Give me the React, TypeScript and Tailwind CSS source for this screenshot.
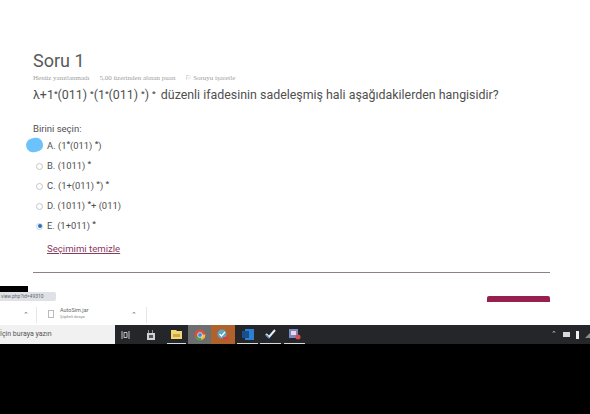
import React from "react";

const options = [
  { key: "A", body: "(1", sup1: "*", rest: "(011) ", sup2: "*", tail: ")" },
  { key: "B", body: "(1011) ", sup1: "*", rest: "", sup2: "", tail: "" },
  { key: "C", body: "(1+(011) ", sup1: "*", rest: ") ", sup2: "*", tail: "" },
  { key: "D", body: "(1011) ", sup1: "*", rest: "+ (011)", sup2: "", tail: "" },
  { key: "E", body: "(1+011) ", sup1: "*", rest: "", sup2: "", tail: "", checked: true },
];

function Sup({ children }: { children: React.ReactNode }) {
  return <span className="relative -top-[3px] text-[8px] font-bold leading-none">{children}</span>;
}

function Option({ item }: { item: (typeof options)[number] }) {
  return (
    <li className="flex h-5 items-center">
      <span className="flex w-[13px] justify-center">
        {item.checked ? (
          <span className="flex h-[7px] w-[7px] items-center justify-center rounded-full border border-[#c3d3e6]">
            <span className="h-[4px] w-[4px] rounded-full bg-[#2f6fb5]" />
          </span>
        ) : (
          <span className="h-[7px] w-[7px] rounded-full border border-[#c4c4c4]" />
        )}
      </span>
      <span className="ml-[1px] whitespace-pre text-[9.4px] text-[#505050]">
        {item.key}. {item.body}
        {item.sup1 && <Sup>{item.sup1}</Sup>}
        {item.rest}
        {item.sup2 && <Sup>{item.sup2}</Sup>}
        {item.tail}
      </span>
    </li>
  );
}

function Quiz() {
  return (
    <div className="relative h-[305px] overflow-hidden bg-white pl-[33px] pr-[40px] pt-[50px]">
      <h1 className="text-[18px] leading-[22px] text-[#5a5a5a]">Soru 1</h1>
      <div className="mt-[3px] flex h-[6px] items-center gap-[10px] whitespace-nowrap font-['Liberation_Serif',serif] text-[7px] leading-none text-[#a0a0a0]">
        <span>Henüz yanıtlanmadı</span>
        <span>5,00 üzerinden alınan puan</span>
        <span>⚐ Soruyu işaretle</span>
      </div>
      <p className="mt-[5px] whitespace-pre text-[12.4px] leading-[18px] text-[#505050]">
        λ+1<Sup>*</Sup>(011) <Sup>*</Sup>(1<Sup>*</Sup>(011) <Sup>*</Sup>) <Sup>*</Sup>
        <span className="ml-[2px]"> düzenli ifadesinin sadeleşmiş hali aşağıdakilerden hangisidir?</span>
      </p>
      <p className="mt-[18px] text-[9.5px] leading-[14px] text-[#505050]">Birini seçin:</p>
      <ul>
        {options.map((item) => (
          <Option key={item.key} item={item} />
        ))}
      </ul>
      <a className="ml-[14px] mt-[6px] block text-[9.6px] leading-[14px] text-[#8a3a5e] underline">Seçimimi temizle</a>
      <div className="mt-[16px] h-px bg-[#8f7f86]" />
      <div className="mt-[23px] flex justify-end">
        <div className="h-[6px] w-[63px] rounded-t-[2px] bg-[#96214f]" />
      </div>
      {/* pen mark and the status bubble lie over the page */}
      <span className="absolute left-[26px] top-[138px] h-[14px] w-[17px] -rotate-12 rounded-full bg-[#6cc3fb]" />
      <span className="absolute left-0 top-[286px] h-[6px] w-[28px] bg-black" />
      <span className="absolute left-0 top-[292px] flex h-[9px] w-[56px] items-center rounded-r-[2px] bg-[#dee1e6] pl-[1px] text-[5px] text-[#666666]">
        view.php?id=49310
      </span>
    </div>
  );
}

function DownloadBar() {
  return (
    <div className="flex h-[20px] items-center bg-white py-[2px] text-[#666666]">
      <div className="flex h-full w-[37px] items-center justify-end border-r border-[#e6e6e6] pr-[7px]">
        <span className="text-[7px]">⌃</span>
      </div>
      <div className="flex h-full w-[110px] items-center border-r border-[#e6e6e6] pl-[11px]">
        <span className="-mt-[3px] h-[8px] w-[6px] border border-[#bbbbbb]" />
        <div className="-mt-[3px] ml-[6px] flex flex-col leading-none">
          <span className="text-[5.5px]">AutoSim.jar</span>
          <span className="mt-[1px] text-[4px] text-[#888888]">Şüpheli dosya</span>
        </div>
        <span className="ml-auto mr-[9px] text-[7px]">⌃</span>
      </div>
    </div>
  );
}

function Taskbar() {
  return (
    <div className="flex h-[19px] items-stretch bg-[#24262a]">
      <div className="flex w-[115px] items-center overflow-hidden bg-[#f1f1f1] text-[7px] text-[#555555]">
        <span className="whitespace-nowrap">İçin buraya yazın</span>
      </div>
      <div className="flex w-[20px] items-center justify-center">
        <svg width="9" height="8" viewBox="0 0 9 8" fill="none" stroke="#c4c4c4" strokeWidth="1">
          <path d="M1 0v8M8 0v8M3 1.5h3v5H3z" />
        </svg>
      </div>
      <div className="flex w-[32px] items-center justify-center">
        <svg width="10" height="10" viewBox="0 0 10 10">
          <path d="M1 3h8v7H1z" fill="#cfd3d6" />
          <path d="M2 0h1v3H2zM6 0h1v3H6z" fill="#8f9497" />
          <path d="M3 5h4v3H3z" fill="#50565a" />
        </svg>
      </div>
      <div className="mr-[2px] flex w-[19px] items-center justify-center border-b border-[#d8d8d8]">
        <svg width="11" height="9" viewBox="0 0 11 9">
          <path d="M0 0h5l1 1h5v8H0z" fill="#f2d774" />
          <path d="M2 4h7v3H2z" fill="#c9a94a" />
        </svg>
      </div>
      <div className="flex w-[23px] items-center justify-center bg-[#6c6e70]">
        <svg width="12" height="12" viewBox="0 0 11 11">
          <circle cx="5.5" cy="5.5" r="5" fill="#d9503f" />
          <path d="M5.5 5.5 1 8l2.5 2.5 3.5-.2z" fill="#49a35a" />
          <path d="M5.5 5.5 10.5 5l-.6 3-2.9 2.3z" fill="#edc23f" />
          <circle cx="5.5" cy="5.5" r="2.2" fill="#4a86d8" stroke="#fff" strokeWidth="0.6" />
        </svg>
      </div>
      <div className="flex w-[24px] items-center justify-center bg-[#b0622c]">
        <svg width="14" height="12" viewBox="0 0 14 12">
          <circle cx="6" cy="5" r="4.5" fill="#5ea6c4" />
          <path d="M3.5 5 5.5 7 9 3" stroke="#fff" strokeWidth="1.2" fill="none" />
          <path d="M7 8h6v3H7z" fill="#d6433a" />
        </svg>
      </div>
      <div className="ml-[2px] flex w-[21px] items-center justify-center border-b border-[#d8d8d8]">
        <svg width="12" height="11" viewBox="0 0 12 11">
          <path d="M3 0h9v11H3z" fill="#2f7fd0" />
          <path d="M0 2h7v7H0z" fill="#17508f" />
        </svg>
      </div>
      <div className="ml-[2px] flex w-[21px] items-center justify-center border-b border-[#d8d8d8]">
        <svg width="11" height="10" viewBox="0 0 11 10" fill="none">
          <path d="M1 5 4 8l6-7" stroke="#e6eef7" strokeWidth="2" />
          <path d="M1 6 4 9" stroke="#3f8fdc" strokeWidth="1.5" />
        </svg>
      </div>
      <div className="ml-[3px] flex w-[21px] items-center justify-center border-b border-[#d8d8d8]">
        <svg width="13" height="12" viewBox="0 0 13 12">
          <path d="M1 1h9v9H1z" fill="#7d86c4" />
          <path d="M3 3h5v4H3z" fill="#e9d8e4" />
          <circle cx="10" cy="9" r="2.5" fill="#dc4b4b" />
        </svg>
      </div>
      <div className="ml-auto -mr-[2px] flex items-center gap-[6px]">
        <span className="text-[7px] leading-none text-[#d5d5d5]">⌃</span>
        <span className="h-[5px] w-[7px] bg-[#d8d8d8]" />
        <span className="h-[8px] w-[3px] bg-[#eeeeee]" />
        <svg width="7" height="7" viewBox="0 0 7 7">
          <path d="M0 7 7 0v7z" fill="#8c8c8c" />
        </svg>
      </div>
    </div>
  );
}

export default function App() {
  return (
    <div className="h-[414px] w-[590px] overflow-hidden bg-black font-['Roboto',sans-serif]">
      <div className="blur-[0.35px]">
        <Quiz />
        <DownloadBar />
        <Taskbar />
      </div>
    </div>
  );
}
